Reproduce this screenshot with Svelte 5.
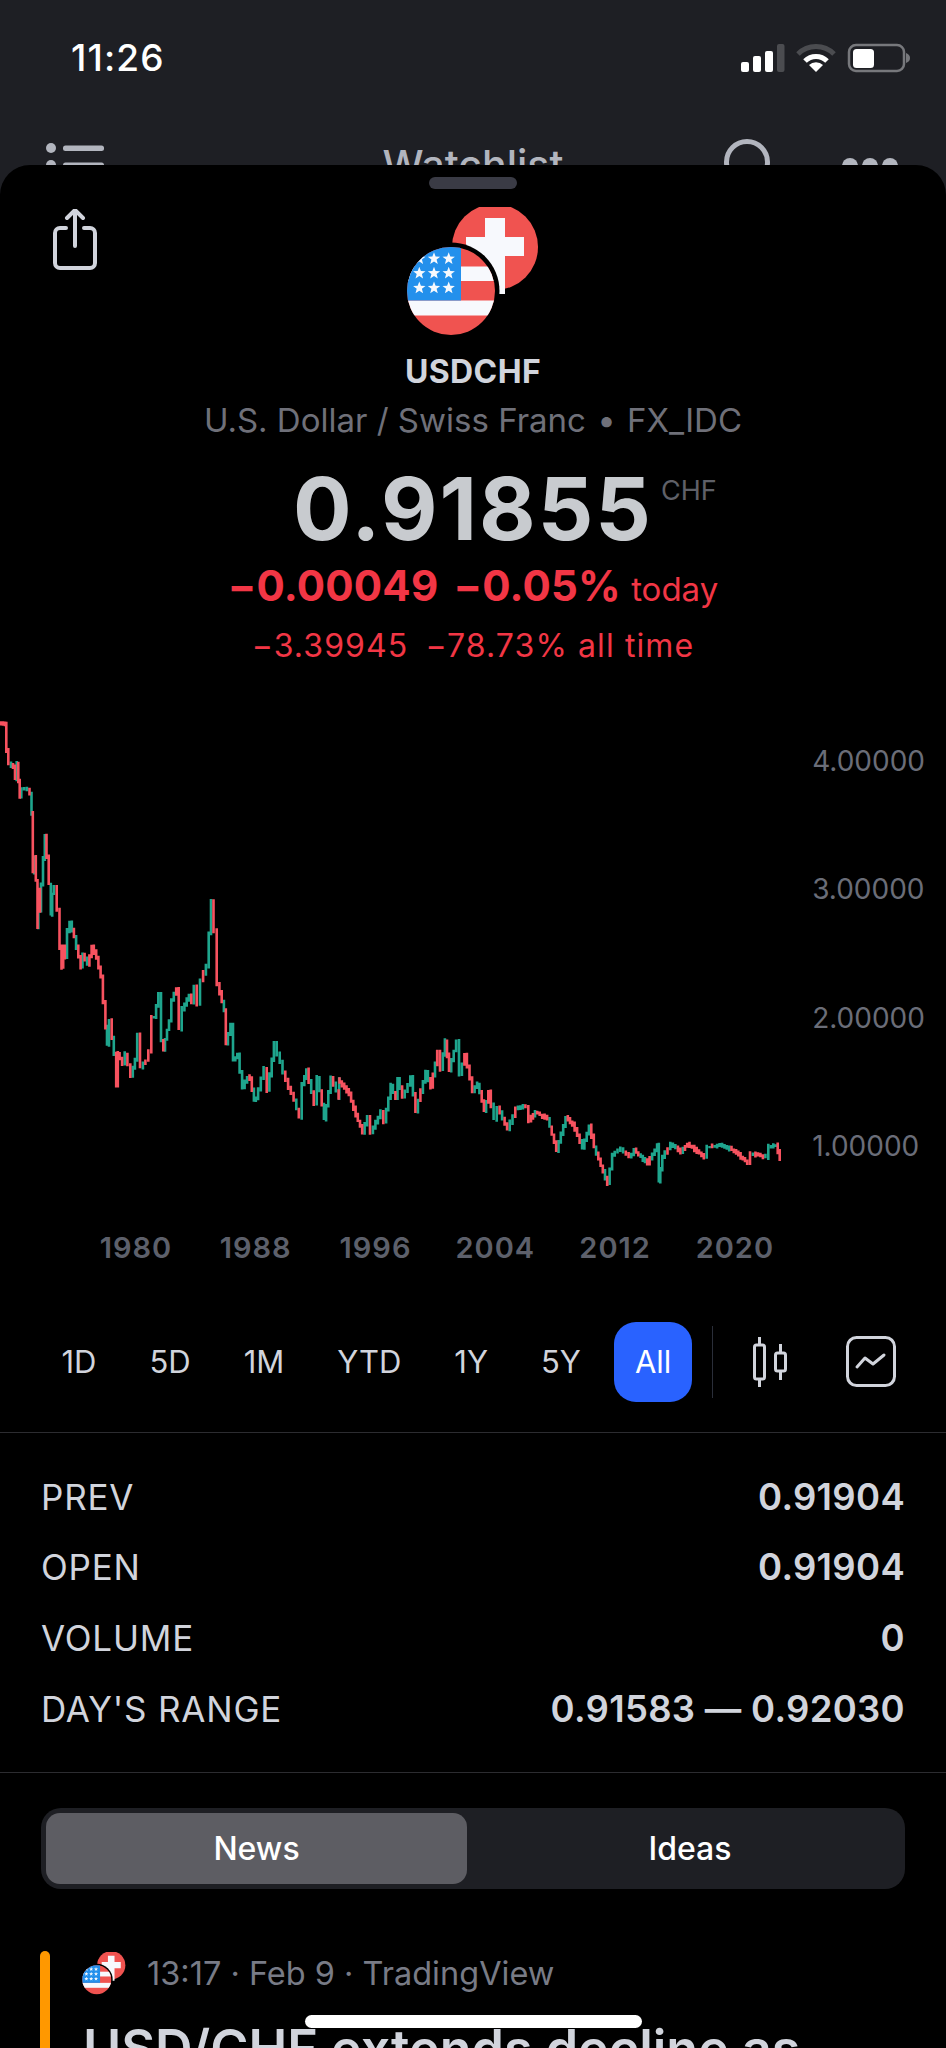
<script>
  // price trace, read off the chart in screen px: [x, y]
  const early = [[0,65],[18,70],[20,150],[30,190],[42,200],[48,235],[52,190],[58,240],[60,290],[68,265],[85,265],[92,280],[97,340],[100,515],[105,470],[110,540],[115,680],[115,610],[120,570],[120,630],[132,475],[137,405],[142,470],[150,550],[155,640],[158,580],[165,560],[175,630],[182,740],[187,800],[192,735],[197,770],[205,690],[212,665],[225,710],[245,800],[250,760],[265,790],[278,740],[292,770],[305,830],[320,980],[322,1030],[332,960],[338,1010],[345,1060],[352,1155],[355,1060],[370,1090],[378,1060],[395,1125],[408,1075],[415,1005],[425,1100],[440,1080],[450,1050],[458,950],[465,950],[478,880],[488,1020],[492,1045],[510,960],[518,900],[532,865],[540,985],[550,925],[570,885],[578,905],[585,860],[595,910],[605,840],[622,795],[630,700],[636,600],[645,690],[655,850],[675,930],[680,1030],[695,975],[703,1080],[715,1065],[730,1160],[745,1130],[752,1135],[765,1200],[770,1195],[795,1105],[805,1170],[825,1030],[835,1060],[860,1140],[885,1200]]
    .map(([x, y]) => [x / 3, 700 + y / 3]);
  const late = [[0,410],[10,310],[22,270],[45,370],[55,290],[75,415],[95,290],[120,350],[115,295],[150,340],[170,405],[190,455],[205,410],[215,455],[245,395],[255,425],[275,315],[290,355],[295,295],[310,350],[335,292],[350,390],[380,275],[395,320],[415,215],[425,265],[438,180],[450,270],[472,183],[482,280],[497,222],[520,330],[535,310],[555,390],[568,335],[585,415],[595,380],[625,445],[650,385],[680,378],[690,420],[708,395],[745,415],[772,510],[800,412],[820,430],[850,500],[870,435],[885,500],[925,610],[940,520],[965,505],[990,530],[1005,510],[1045,548],[1075,495],[1078,600],[1090,530],[1115,490],[1145,515],[1165,490],[1215,530],[1225,500],[1270,495],[1305,510],[1345,548],[1355,520],[1400,530],[1410,498],[1430,495],[1442,533]]
    .map(([x, y]) => [300 + x / 3, 980 + y / 3]);
  const trace = [...early, ...late];

  let redPath = '';
  let greenPath = '';
  let seed = 7;
  function rnd() {
    seed = (seed * 16807) % 2147483647;
    return seed / 2147483647;
  }
  for (let i = 0; i < trace.length - 1; i++) {
    const [x0, y0] = trace[i];
    const [x1, y1] = trace[i + 1];
    const n = Math.max(1, Math.round(Math.abs(x1 - x0) / 2.4));
    for (let k = 0; k < n; k++) {
      const ya = y0 + ((y1 - y0) * k) / n;
      const yb = y0 + ((y1 - y0) * (k + 1)) / n;
      const x = (x0 + ((x1 - x0) * (k + 0.5)) / n).toFixed(1);
      const top = Math.min(ya, yb) - 1 - 2 * rnd();
      const bottom = Math.max(ya, yb) + 1 + 2 * rnd();
      const falling = yb > ya ? rnd() > 0.2 : rnd() < 0.2;
      const seg = `M${x} ${top.toFixed(1)}V${bottom.toFixed(1)}`;
      if (falling) redPath += seg;
      else greenPath += seg;
    }
  }

  function star(cx, cy, r) {
    let d = '';
    for (let i = 0; i < 10; i++) {
      const rad = i % 2 ? r * 0.42 : r;
      const a = -Math.PI / 2 + (i * Math.PI) / 5;
      d += `${i ? 'L' : 'M'}${(cx + rad * Math.cos(a)).toFixed(1)} ${(cy + rad * Math.sin(a)).toFixed(1)}`;
    }
    return d + 'Z';
  }
  const stars = [258.7, 273.3, 288]
    .flatMap((y) => [419.3, 434, 448.7].map((x) => star(x, y, 6.5)))
    .join('');

  const axis = ['4.00000', '3.00000', '2.00000', '1.00000'];
  const years = ['1980', '1988', '1996', '2004', '2012', '2020'];
  const ranges = ['1D', '5D', '1M', 'YTD', '1Y', '5Y', 'All'];
  const stats = [
    ['PREV', '0.91904'],
    ['OPEN', '0.91904'],
    ['VOLUME', '0'],
    ["DAY'S RANGE", '0.91583 — 0.92030']
  ];
</script>

{#snippet flags(width, height, id)}
  <svg {width} {height} viewBox="403 207 140 133" class="flags">
    <defs>
      <clipPath id="us-{id}"><circle cx="451" cy="291" r="44" /></clipPath>
    </defs>
    <circle cx="495" cy="247" r="43" fill="#f05350" />
    <path d="M485 218h20v19h19v19h-19v38h-20v-38h-19v-19h19z" fill="#f7f9fd" />
    <circle cx="451" cy="291" r="48.5" fill="#000" />
    <g clip-path="url(#us-{id})">
      <rect x="405" y="245" width="92" height="92" fill="#f05350" />
      <rect x="405" y="266.5" width="92" height="14.5" fill="#f7f9fd" />
      <rect x="405" y="300.5" width="92" height="15" fill="#f7f9fd" />
      <rect x="405" y="245" width="56" height="55.5" fill="#2390ec" />
      <path d={stars} fill="#f7f9fd" />
    </g>
  </svg>
{/snippet}

<div class="app">
  <header class="behind">
    <div class="status">
      <span class="time">11:26</span>
      <svg width="170" height="30" viewBox="741 43 170 30" class="status-icons">
        <g fill="#fff">
          <rect x="741" y="62" width="8" height="10" rx="2" />
          <rect x="753" y="56" width="8" height="16" rx="2" />
          <rect x="765" y="51" width="8" height="21" rx="2" />
        </g>
        <rect x="777" y="44" width="7.5" height="28" rx="2" fill="#4b4c50" />
        <path d="M798 54a25.500 25.500 0 0 1 36 0" fill="none" stroke="#4b4c50" stroke-width="5" />
        <path d="M805 61a15.500 15.500 0 0 1 22 0" fill="none" stroke="#fff" stroke-width="5" />
        <path d="M816 72l-7-7a10 10 0 0 1 14 0z" fill="#fff" />
        <rect x="849" y="45" width="55" height="26" rx="7" fill="none" stroke="#77787c" stroke-width="2.500" />
        <rect x="853" y="49" width="21" height="19" rx="3.500" fill="#fff" />
        <path d="M906 53c3 1 4 3 4 5s-1 4-4 5z" fill="#77787c" />
      </svg>
    </div>
    <nav class="navbar">
      <svg width="60" height="40" viewBox="0 0 60 40" fill="#b2b5be">
        <circle cx="5" cy="5" r="5" />
        <rect x="17" y="2.500" width="41" height="5.500" rx="2.500" />
        <circle cx="5" cy="22" r="5" />
        <rect x="17" y="19.500" width="41" height="5.500" rx="2.500" />
      </svg>
      <span class="nav-title">Watchlist</span>
      <div class="nav-right">
        <svg width="60" height="60" viewBox="0 0 60 60">
          <circle cx="25" cy="23" r="20.500" fill="none" stroke="#b2b5be" stroke-width="5" />
        </svg>
        <svg width="56" height="20" viewBox="0 0 56 20" fill="#b2b5be">
          <circle cx="8" cy="8" r="8" />
          <circle cx="28" cy="8" r="8" />
          <circle cx="48" cy="8" r="8" />
        </svg>
      </div>
    </nav>
  </header>

  <main class="sheet">
    <div class="handle"></div>

    <div class="top">
      <svg class="share" width="50" height="62" viewBox="0 0 50 62" fill="none" stroke="#d1d4dc" stroke-width="4" stroke-linecap="round" stroke-linejoin="round">
        <path d="M14 19H8a5 5 0 0 0-5 5v30a5 5 0 0 0 5 5h30a5 5 0 0 0 5-5V24a5 5 0 0 0-5-5h-6" />
        <path d="M23 37V1M15 9l8-8 8 8" />
      </svg>
      {@render flags(140, 133, 'big')}
      <div></div>
    </div>

    <div class="symbol">USDCHF</div>
    <div class="desc">U.S. Dollar / Swiss Franc <span class="dot">•</span> FX_IDC</div>
    <div class="price-row">
      <span class="price">0.91855<span class="currency">CHF</span></span>
    </div>
    <div class="change"><span class="change-vals">−0.00049 −0.05%</span> <span class="change-note">today</span></div>
    <div class="alltime"><span class="abs-move">−3.39945</span> −78.73% all time</div>

    <section class="chart">
      <svg width="800" height="490" viewBox="0 702.500 800 490" fill="none" stroke-width="2.600">
        <path d={greenPath} stroke="#1ea58d" />
        <path d={redPath} stroke="#f7525f" />
      </svg>
      <div class="axis">
        {#each axis as label}
          <span>{label}</span>
        {/each}
      </div>
    </section>

    <div class="years">
      {#each years as year}
        <span>{year}</span>
      {/each}
    </div>

    <div class="ranges">
      {#each ranges as range}
        <button class="range" class:active={range === 'All'}>{range}</button>
      {/each}
      <div class="vline"></div>
      <svg class="candle-icon" width="34" height="50" viewBox="0 0 34 50" fill="none" stroke="#d1d4dc" stroke-width="3">
        <rect x="1.500" y="8" width="10" height="34" rx="2" />
        <path d="M6.500 0v8M6.500 42v8" />
        <rect x="22.500" y="16" width="10" height="18" rx="2" />
        <path d="M27.500 7v9M27.500 34v9" />
      </svg>
      <svg class="line-icon" width="50" height="51" viewBox="0 0 50 51" fill="none" stroke="#d1d4dc" stroke-width="3">
        <rect x="1.500" y="1.500" width="47" height="48" rx="9" />
        <path d="M11 31l8-9 8 6 11-9" stroke-linejoin="round" stroke-linecap="round" />
      </svg>
    </div>

    <div class="rule first"></div>

    <dl class="stats">
      {#each stats as [name, value]}
        <div class="stat">
          <dt>{name}</dt>
          <dd>{value}</dd>
        </div>
      {/each}
    </dl>

    <div class="rule"></div>

    <div class="segment">
      <div class="seg active">News</div>
      <div class="seg ideas">Ideas</div>
    </div>

    <article class="news">
      <div class="news-bar"></div>
      <div class="news-body">
        <div class="news-meta">
          {@render flags(46, 44, 'mini')}
          <span>13:17 · Feb 9 · TradingView</span>
        </div>
        <h2>USD/CHF extends decline as</h2>
      </div>
    </article>
  </main>

  <div class="home"></div>
</div>

<style>
  :global(body) {
    margin: 0;
    background: #000;
  }

  .app {
    position: relative;
    width: 946px;
    height: 2048px;
    overflow: hidden;
    background: #1e1f24;
    font-family: Inter, "Liberation Sans", sans-serif;
    color: #d1d4dc;
  }

  .behind {
    height: 165px;
    overflow: hidden;
  }

  .status {
    display: flex;
    justify-content: space-between;
    height: 88px;
    padding: 36px 36px 0 71px;
    box-sizing: border-box;
  }

  .time {
    font-size: 37px;
    line-height: 44px;
    font-weight: 500;
    letter-spacing: 1.1px;
    color: #fff;
  }

  .status-icons {
    margin-top: 7px;
    margin-right: -1px;
  }

  .navbar {
    display: flex;
    justify-content: space-between;
    position: relative;
    padding: 60px 48px 0 46px;
    height: 100px;
    box-sizing: border-box;
    margin-top: -5px;
  }

  .navbar svg {
    flex: none;
  }

  .nav-title {
    position: absolute;
    left: 0;
    right: 0;
    top: 59px;
    text-align: center;
    font-size: 41px;
    line-height: 46px;
    font-weight: 500;
    color: #b2b5be;
  }

  .nav-right {
    display: flex;
    gap: 60px;
    margin-top: -4px;
  }

  .nav-right svg:last-child {
    margin-top: 19px;
  }

  .sheet {
    background: #000;
    border-radius: 30px 30px 0 0;
  }

  .handle {
    width: 88px;
    height: 12px;
    margin: 0 auto;
    position: relative;
    top: 12px;
    border-radius: 6px;
    background: #3a3b45;
  }

  .top {
    display: grid;
    grid-template-columns: 1fr auto 1fr;
    margin-top: 30px;
  }

  .flags {
    display: block;
  }

  .share {
    margin: 2px 0 0 52px;
  }

  .symbol {
    margin-top: 14px;
    text-align: center;
    font-size: 32px;
    line-height: 36px;
    font-weight: 700;
    letter-spacing: 0.4px;
  }

  .desc {
    margin-top: 10px;
    text-align: center;
    font-size: 33px;
    line-height: 40px;
    color: #6f7079;
  }

  .dot {
    margin: 0 2px;
  }

  .price-row {
    display: flex;
    justify-content: center;
    margin-top: 27px;
  }

  .price {
    position: relative;
    font-size: 87px;
    line-height: 84px;
    font-weight: 700;
    letter-spacing: 2px;
    color: #c8cbcf;
  }

  .currency {
    position: absolute;
    left: calc(100% + 8px);
    top: 9px;
    font-size: 27px;
    line-height: 30px;
    font-weight: 400;
    letter-spacing: 0;
    color: #5f6068;
  }

  .change {
    margin-top: 11px;
    text-align: center;
    font-size: 42px;
    line-height: 48px;
    font-weight: 700;
    letter-spacing: 0.2px;
    color: #f23645;
  }

  .change-vals {
    word-spacing: 5px;
  }

  .change-note {
    font-size: 33px;
    font-weight: 400;
    letter-spacing: 0;
  }

  .alltime {
    margin-top: 13px;
    text-align: center;
    font-size: 32px;
    line-height: 40px;
    letter-spacing: 1.1px;
    color: #f23645;
  }

  .abs-move {
    margin-right: 7px;
  }

  .chart {
    display: flex;
    justify-content: space-between;
    margin-top: 37px;
    height: 490px;
    padding-right: 21px;
  }

  .axis {
    display: flex;
    flex-direction: column;
    gap: 92.4px;
    padding-top: 40px;
    font-size: 28px;
    line-height: 36px;
    color: #6a6d78;
  }

  .years {
    display: flex;
    margin-top: 36.500px;
    padding-left: 76px;
    font-size: 29px;
    line-height: 36px;
    font-weight: 600;
    letter-spacing: 1px;
    color: #5d606b;
  }

  .years span {
    width: 119.800px;
    text-align: center;
  }

  .ranges {
    display: flex;
    align-items: center;
    gap: 14px;
    height: 80px;
    margin-top: 56px;
    padding-left: 42px;
  }

  .range {
    height: 80px;
    padding: 0 19.500px;
    border: none;
    border-radius: 22px;
    background: none;
    font: inherit;
    font-size: 31px;
    color: #d1d4dc;
  }

  .range.active {
    padding: 0 20.500px;
    background: #2962ff;
    color: #fff;
  }

  .vline {
    width: 1px;
    height: 72px;
    margin-left: 6px;
    background: #2a2e39;
  }

  .candle-icon {
    margin-left: 26px;
  }

  .line-icon {
    margin-left: 45px;
  }

  .rule {
    height: 1px;
    background: #2c2c30;
  }

  .rule.first {
    margin-top: 30px;
  }

  .stats {
    margin: 0;
    padding: 29px 41px 28px;
  }

  .stat {
    display: flex;
    justify-content: space-between;
    align-items: center;
    height: 70.600px;
    font-size: 35px;
    letter-spacing: 0.8px;
  }

  .stat dd {
    margin: 0;
    font-size: 36.500px;
    font-weight: 600;
    letter-spacing: 0.3px;
  }

  .segment {
    display: flex;
    margin: 35px 41px 0;
    padding: 5px;
    height: 81px;
    box-sizing: border-box;
    border-radius: 20px;
    background: #1e1f24;
  }

  .seg {
    flex: 1;
    display: flex;
    align-items: center;
    justify-content: center;
    border-radius: 14px;
    font-size: 32px;
    font-weight: 500;
    color: #fff;
  }

  .seg.active {
    flex: none;
    width: 421px;
    background: #5d5d63;
  }

  .seg.ideas {
    padding-left: 13px;
  }

  .news {
    display: flex;
    margin: 62px 0 0 40px;
  }

  .news-bar {
    width: 10px;
    height: 200px;
    border-radius: 5px 5px 0 0;
    background: #ff9800;
  }

  .news-body {
    padding-left: 31px;
  }

  .news-meta {
    display: flex;
    align-items: center;
    gap: 20px;
    height: 46px;
    font-size: 32.500px;
    color: #787b86;
  }

  h2 {
    margin: 24px 0 0 2px;
    font-size: 52px;
    line-height: 56px;
    font-weight: 600;
    white-space: nowrap;
    color: #d1d4dc;
  }

  .home {
    position: absolute;
    left: 305px;
    top: 2015px;
    width: 337px;
    height: 13px;
    border-radius: 7px;
    background: #fff;
  }
</style>
